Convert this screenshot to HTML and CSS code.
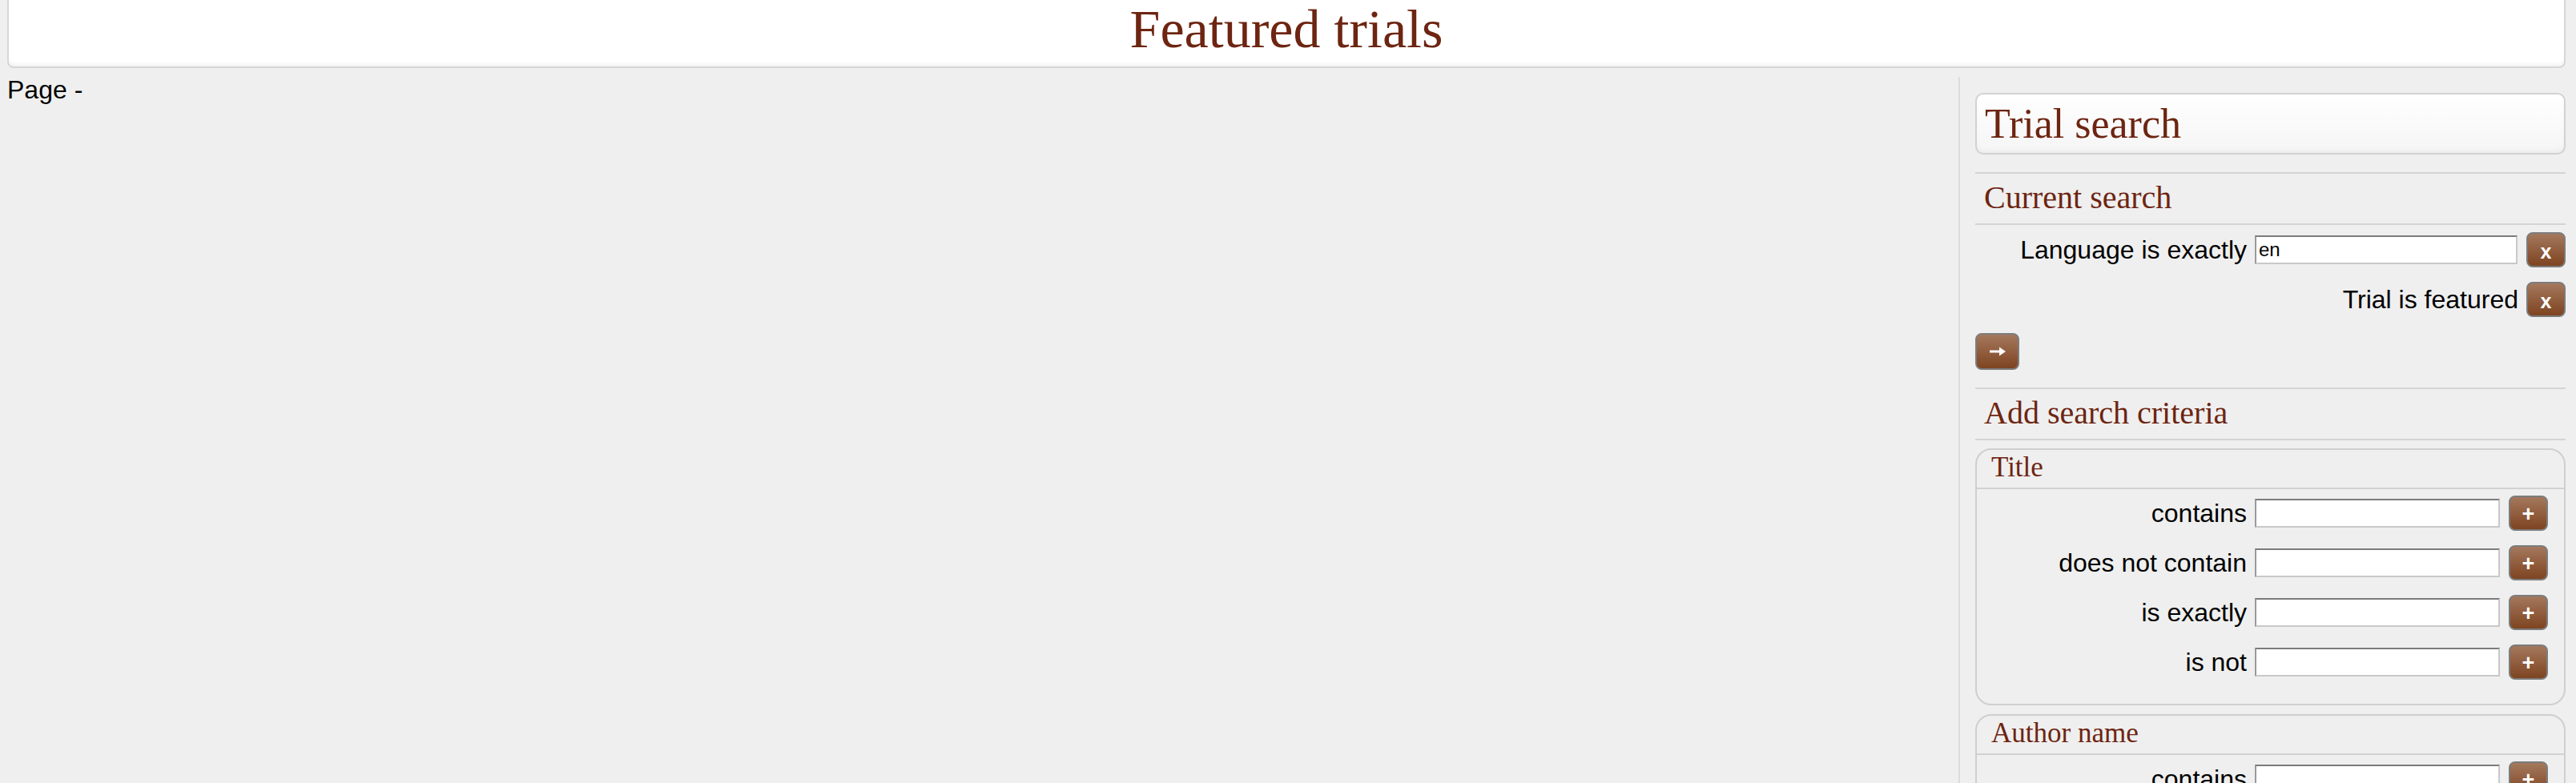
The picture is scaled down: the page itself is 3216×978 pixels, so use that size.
FILE: index.html
```html
<!DOCTYPE html>
<html lang="en">
<head>
<meta charset="utf-8">
<title>Featured trials</title>
<link rel="stylesheet" href="styles.css">
</head>
<body>
<div class="page">
  <header class="banner">
    <h1 class="banner-title">Featured trials</h1>
  </header>
  <div class="layout">
    <main class="content">
      <p class="pager">Page -</p>
    </main>
    <aside class="sidebar">
      <div class="panel-head">Trial search</div>

      <h2 class="section-head">Current search</h2>
      <div class="current">
        <div class="row">
          <label class="lbl" for="cur-lang">Language is exactly</label>
          <input class="field field-wide" id="cur-lang" type="text" value="en">
          <button class="btn btn-x" type="button">x</button>
        </div>
        <div class="row">
          <span class="lbl">Trial is featured</span>
          <button class="btn btn-x" type="button">x</button>
        </div>
        <div class="go">
          <button class="btn btn-go" type="button" aria-label="Search">
            <svg width="22" height="12" viewBox="0 0 22 12" aria-hidden="true">
              <path d="M1 6 H15" stroke="#fff" stroke-width="3" fill="none"/>
              <polygon points="13,0.5 21,6 13,11.5" fill="#fff"/>
            </svg>
          </button>
        </div>
      </div>

      <h2 class="section-head">Add search criteria</h2>

      <div class="group">
        <div class="group-head">Title</div>
        <div class="group-rows">
          <div class="row">
            <label class="lbl" for="t-c">contains</label>
            <input class="field" id="t-c" type="text">
            <button class="btn btn-plus" type="button">+</button>
          </div>
          <div class="row">
            <label class="lbl" for="t-nc">does not contain</label>
            <input class="field" id="t-nc" type="text">
            <button class="btn btn-plus" type="button">+</button>
          </div>
          <div class="row">
            <label class="lbl" for="t-ex">is exactly</label>
            <input class="field" id="t-ex" type="text">
            <button class="btn btn-plus" type="button">+</button>
          </div>
          <div class="row">
            <label class="lbl" for="t-not">is not</label>
            <input class="field" id="t-not" type="text">
            <button class="btn btn-plus" type="button">+</button>
          </div>
        </div>
      </div>

      <div class="group">
        <div class="group-head">Author name</div>
        <div class="group-rows">
          <div class="row">
            <label class="lbl" for="a-c">contains</label>
            <input class="field" id="a-c" type="text">
            <button class="btn btn-plus" type="button">+</button>
          </div>
          <div class="row">
            <label class="lbl" for="a-nc">does not contain</label>
            <input class="field" id="a-nc" type="text">
            <button class="btn btn-plus" type="button">+</button>
          </div>
          <div class="row">
            <label class="lbl" for="a-ex">is exactly</label>
            <input class="field" id="a-ex" type="text">
            <button class="btn btn-plus" type="button">+</button>
          </div>
          <div class="row">
            <label class="lbl" for="a-not">is not</label>
            <input class="field" id="a-not" type="text">
            <button class="btn btn-plus" type="button">+</button>
          </div>
        </div>
      </div>
    </aside>
  </div>
</div>
</body>
</html>
```

FILE: styles.css
```css
html, body {
  margin: 0;
  padding: 0;
}

body {
  background: #efefef;
  color: #000;
  font-family: "Liberation Sans", Arial, Helvetica, sans-serif;
  font-size: 32px;
}

.page {
  padding: 0 13px 0 9px;
}

/* ---------- banner ---------- */
.banner {
  box-sizing: border-box;
  height: 85px;
  background: #fff;
  border: 2px solid #d6d6d6;
  border-top: 0;
  border-radius: 0 0 8px 8px;
  box-shadow: inset 0 -6px 6px -4px rgba(0, 0, 0, 0.07);
}

.banner-title {
  margin: 0;
  text-align: center;
  font-family: "Liberation Serif", Georgia, serif;
  font-weight: normal;
  font-size: 68px;
  line-height: 73px;
  color: #6d2511;
}

/* ---------- layout ---------- */
.layout {
  display: flex;
  align-items: flex-start;
}

.content {
  flex: 1;
  min-width: 0;
  padding-top: 9px;
}

.pager {
  margin: 0;
  font-size: 32px;
}

.sidebar {
  box-sizing: border-box;
  width: 758px;
  margin-top: 11px;
  min-height: 900px;
  border-left: 2px solid #dcdcdc;
  padding-left: 19px;
}

/* ---------- sidebar headings ---------- */
.panel-head {
  box-sizing: border-box;
  height: 77px;
  margin-top: 20px;
  padding: 2px 10px 0;
  border: 2px solid #d2d2d2;
  border-radius: 10px;
  background: linear-gradient(#ffffff, #f5f5f5);
  box-shadow: inset 0 -4px 6px -2px rgba(0, 0, 0, 0.05);
  font-family: "Liberation Serif", Georgia, serif;
  font-size: 52px;
  line-height: 69px;
  color: #6d2511;
}

.section-head {
  margin: 22px 0 0;
  padding: 0 0 2px 11px;
  border-top: 2px solid #d4d4d4;
  border-bottom: 2px solid #d4d4d4;
  font-family: "Liberation Serif", Georgia, serif;
  font-weight: normal;
  font-size: 40px;
  line-height: 60px;
  color: #6d2511;
}

/* ---------- rows ---------- */
.current {
  display: flex;
  flex-direction: column;
  gap: 18px;
  padding-top: 9px;
}

.row {
  display: flex;
  align-items: center;
  justify-content: flex-end;
  height: 44px;
}

.lbl {
  margin-right: 10px;
  font-size: 32px;
  white-space: nowrap;
}

.field {
  box-sizing: border-box;
  width: 306px;
  height: 36px;
  margin: 0 11px 0 0;
  padding: 0 3px;
  border: 2px solid;
  border-color: #7b7b7b #c9c9c9 #c9c9c9 #9a9a9a;
  background: #fff;
  font-family: "Liberation Sans", Arial, sans-serif;
  font-size: 24px;
  color: #000;
}

.field-wide {
  width: 328px;
}

.go {
  margin-top: 2px;
}

.btn {
  box-sizing: border-box;
  width: 49px;
  height: 44px;
  margin: 0;
  padding: 0;
  border: 2px solid #7c7c7c;
  border-radius: 8px;
  background: linear-gradient(#a4785d, #7e4421);
  color: #fff;
  font-family: "Liberation Sans", Arial, sans-serif;
  font-weight: bold;
  line-height: 1;
  display: flex;
  align-items: center;
  justify-content: center;
}

.btn-x {
  font-size: 25px;
  padding-top: 5px;
}

.btn-plus {
  font-size: 27px;
  padding-top: 3px;
}

.btn-go {
  width: 55px;
  height: 46px;
}

/* ---------- criteria groups ---------- */
.group {
  margin-top: 10px;
  padding-bottom: 30px;
  border: 2px solid #cfcfcf;
  border-radius: 20px;
}

.group + .group {
  margin-top: 11px;
}

.group-head {
  padding: 0 0 4px 18px;
  border-bottom: 2px solid #d2d2d2;
  font-family: "Liberation Serif", Georgia, serif;
  font-size: 35px;
  line-height: 43px;
  color: #6d2511;
}

.group-rows {
  display: flex;
  flex-direction: column;
  gap: 18px;
  padding: 8px 20px 0 0;
}
```
